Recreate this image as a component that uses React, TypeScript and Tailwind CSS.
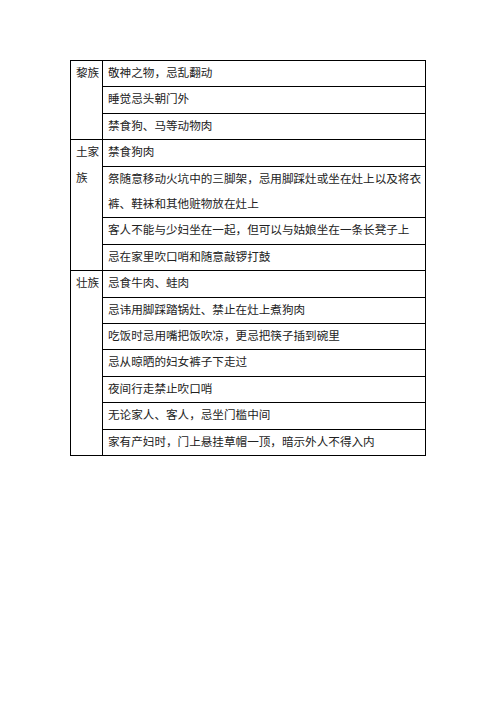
const groups = [
  {
    name: "黎族",
    items: ["敬神之物，忌乱翻动", "睡觉忌头朝门外", "禁食狗、马等动物肉"],
  },
  {
    name: "土家族",
    items: [
      "禁食狗肉",
      "祭随意移动火坑中的三脚架，忌用脚踩灶或坐在灶上以及将衣裤、鞋袜和其他赃物放在灶上",
      "客人不能与少妇坐在一起，但可以与姑娘坐在一条长凳子上",
      "忌在家里吹口哨和随意敲锣打鼓",
    ],
  },
  {
    name: "壮族",
    items: [
      "忌食牛肉、蛙肉",
      "忌讳用脚踩踏锅灶、禁止在灶上煮狗肉",
      "吃饭时忌用嘴把饭吹凉，更忌把筷子插到碗里",
      "忌从晾晒的妇女裤子下走过",
      "夜间行走禁止吹口哨",
      "无论家人、客人，忌坐门槛中间",
      "家有产妇时，门上悬挂草帽一顶，暗示外人不得入内",
    ],
  },
];

export default function App() {
  return (
    <div
      className="w-[496px] h-[702px] bg-white pt-[60px] pl-[70px]"
      style={{ fontFamily: '"Liberation Serif", "Noto Sans CJK SC", serif' }}
    >
      <table className="w-[356px] border border-black text-[11.6px] leading-[25.4px] text-[#222]">
        <tbody>
          {groups.map((g) =>
            g.items.map((item, i) => (
              <tr key={g.name + i}>
                {i === 0 && (
                  <td
                    rowSpan={g.items.length}
                    className="border border-black align-top pl-[5px] pr-[2px]"
                  >
                    <div className="w-[24px] break-all">{g.name}</div>
                  </td>
                )}
                <td className="border border-black pl-[5px] pr-[3px] align-middle">{item}</td>
              </tr>
            ))
          )}
        </tbody>
      </table>
    </div>
  );
}
